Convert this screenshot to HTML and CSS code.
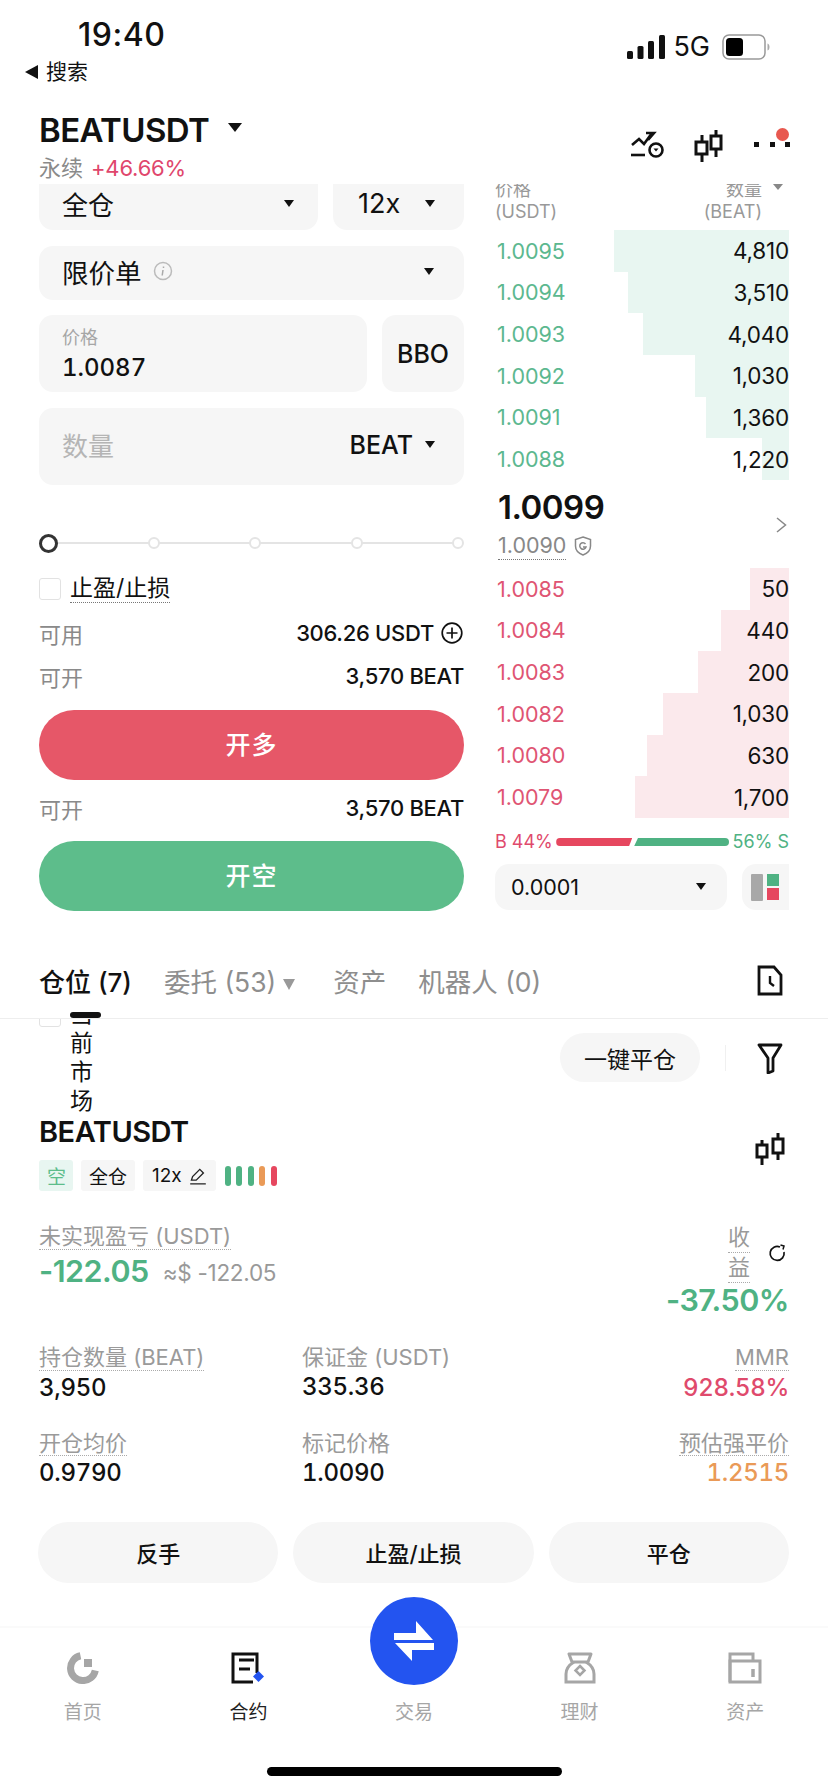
FILE: index.html
```html
<!DOCTYPE html>
<html lang="zh-CN">
<head>
<meta charset="utf-8">
<title>BEATUSDT</title>
<link rel="stylesheet" href="styles.css">
</head>
<body>
<div class="app">
  <div class="status">
    <div class="status-left">
      <div class="time">19:40</div>
      <div class="back"><span class="back-tri"></span>搜索</div>
    </div>
    <div class="status-right">
      <svg class="signal" width="38" height="24" viewBox="0 0 38 24"><rect x="0" y="16" width="6" height="8" rx="1.5"/><rect x="10.500" y="11" width="6" height="13" rx="1.500"/><rect x="21" y="6" width="6" height="18" rx="1.500"/><rect x="32" y="0" width="6" height="24" rx="1.500"/></svg>
      <span class="net">5G</span>
      <svg class="battery" width="48" height="26" viewBox="0 0 48 26"><rect x="1" y="1" width="42" height="24" rx="6" fill="#fff" stroke="#999" stroke-width="1.500"/><rect x="4" y="4" width="17" height="18" rx="3.500" fill="#000"/><path d="M45.500 9.500c1.500.5 2 2 2 3.500s-.5 3-2 3.500z" fill="#aaa"/></svg>
    </div>
  </div>

  <header class="hdr">
    <div>
      <div class="title-line"><span class="title">BEATUSDT</span><span class="tri tri-lg"></span></div>
      <div class="subline"><span class="muted">永续</span><span class="change">+46.66%</span></div>
    </div>
    <div class="hdr-icons">
      <svg width="34" height="28" viewBox="0 0 34 28" fill="none" stroke="#111" stroke-width="2.600"><path d="M2 15l7-6 5 5 8-11"/><path d="M16 3h8v0l-6 7" /><path d="M1 25h14"/><circle cx="26" cy="20" r="6.500"/><path d="M23.500 18.500h5l-2.500 3z" fill="#111" stroke="none"/></svg>
      <svg width="30" height="32" viewBox="0 0 30 32" fill="none" stroke="#111" stroke-width="3"><path d="M8 5v7M8 24v8M22 0v6M22 19v8"/><rect x="2" y="12" width="11" height="12"/><rect x="17" y="6" width="10" height="13"/></svg>
      <div class="more"><i></i><i></i><i></i><b></b></div>
    </div>
  </header>

  <section class="trade">
    <div class="form">
      <div class="row">
        <div class="field sel cut grow"><span>全仓</span><span class="tri"></span></div>
        <div class="field sel cut lev"><span>12x</span><span class="tri"></span></div>
      </div>
      <div class="field sel type"><span class="type-l">限价单<svg width="20" height="20" viewBox="0 0 20 20" fill="none"><circle cx="10" cy="10" r="8.500" stroke="#bbb" stroke-width="1.500"/><path d="M10.500 5.500v1.500M10 9l-.8 5.500" stroke="#aaa" stroke-width="1.500"/></svg></span><span class="tri"></span></div>
      <div class="row price-row">
        <div class="field price grow"><span class="price-l">价格</span><span class="price-v">1.0087</span></div>
        <div class="field bbo">BBO</div>
      </div>
      <div class="field sel qty"><span class="qty-l">数量</span><span class="qty-r">BEAT<span class="tri"></span></span></div>
      <div class="slider"><span class="dot first"></span><span class="dot"></span><span class="dot"></span><span class="dot"></span><span class="dot"></span></div>
      <div class="check"><span class="box"></span><span class="dotted">止盈/止损</span></div>
      <div class="kv kv-a"><span class="muted">可用</span><span class="kv-v">306.26 USDT<svg width="22" height="22" viewBox="0 0 22 22" fill="none" stroke="#111" stroke-width="1.700"><circle cx="11" cy="11" r="9.800"/><path d="M11 5.500v11M5.500 11h11"/></svg></span></div>
      <div class="kv kv-b"><span class="muted">可开</span><span class="kv-v">3,570 BEAT</span></div>
      <div class="cta buy">开多</div>
      <div class="kv kv-c"><span class="muted">可开</span><span class="kv-v">3,570 BEAT</span></div>
      <div class="cta sell">开空</div>
    </div>

    <div class="book">
      <div class="book-head">
        <div>价格<br>(USDT)</div>
        <div class="book-head-r">数量<span class="tri tri-gray"></span><br><span class="beat-u">(BEAT)</span></div>
      </div>
      <div class="rows asks">
        <div class="ob"><i style="width:175px"></i><span class="p">1.0095</span><span class="q">4,810</span></div>
        <div class="ob"><i style="width:161px"></i><span class="p">1.0094</span><span class="q">3,510</span></div>
        <div class="ob"><i style="width:146px"></i><span class="p">1.0093</span><span class="q">4,040</span></div>
        <div class="ob"><i style="width:94px"></i><span class="p">1.0092</span><span class="q">1,030</span></div>
        <div class="ob"><i style="width:83px"></i><span class="p">1.0091</span><span class="q">1,360</span></div>
        <div class="ob"><i style="width:27px"></i><span class="p">1.0088</span><span class="q">1,220</span></div>
      </div>
      <div class="mid">
        <div>
          <div class="last">1.0099</div>
          <div class="mark"><span class="dotted">1.0090</span><svg width="18" height="20" viewBox="0 0 18 20" fill="none" stroke="#888" stroke-width="1.500"><path d="M9 1l7.500 2.500V10c0 4-3.500 7.500-7.500 9-4-1.500-7.500-5-7.500-9V3.500z"/><path d="M11.500 8a3.200 3.200 0 1 0 .5 3H9"/></svg></div>
        </div>
        <svg class="chev" width="11" height="16" viewBox="0 0 11 16" fill="none" stroke="#888" stroke-width="1.500"><path d="M1 1l8.500 7L1 15"/></svg>
      </div>
      <div class="rows bids">
        <div class="ob"><i style="width:39px"></i><span class="p">1.0085</span><span class="q">50</span></div>
        <div class="ob"><i style="width:68px"></i><span class="p">1.0084</span><span class="q">440</span></div>
        <div class="ob"><i style="width:91px"></i><span class="p">1.0083</span><span class="q">200</span></div>
        <div class="ob"><i style="width:126px"></i><span class="p">1.0082</span><span class="q">1,030</span></div>
        <div class="ob"><i style="width:142px"></i><span class="p">1.0080</span><span class="q">630</span></div>
        <div class="ob"><i style="width:154px"></i><span class="p">1.0079</span><span class="q">1,700</span></div>
      </div>
      <div class="ratio">
        <span class="r">B 44%</span>
        <span class="ratio-bars"><span class="rb"></span><span class="gb"></span></span>
        <span class="g">56% S</span>
      </div>
      <div class="book-foot">
        <div class="field step"><span>0.0001</span><span class="tri"></span></div>
        <div class="field layout"><span class="l-gray"></span><span class="l-col"><span class="l-green"></span><span class="l-red"></span></span></div>
      </div>
    </div>
  </section>

  <nav class="tabs">
    <span class="tab on">仓位 (7)</span>
    <span class="tab drop">委托 (53)<span class="tri tri-tab"></span></span>
    <span class="tab">资产</span>
    <span class="tab">机器人 (0)</span>
    <svg class="tab-ic" width="26" height="31" viewBox="0 0 26 31" fill="none" stroke="#111" stroke-width="2.800"><path d="M2 2h15l7 8v19H2z"/><path d="M13 11v7l4 3" stroke-width="2.400"/></svg>
    <span class="ind"></span>
  </nav>

  <section class="pos">
    <div class="filter">
      <span class="box box-f"></span>
      <span class="vert">当前市场</span>
      <span class="pill">一键平仓</span>
      <span class="sep"></span>
      <svg width="26" height="31" viewBox="0 0 26 31" fill="none" stroke="#111" stroke-width="2.800"><path d="M2 2h22l-8 13v13l-5 2V15z" stroke-linejoin="round"/></svg>
    </div>
    <div class="pos-head">
      <div>
        <div class="pos-title">BEATUSDT</div>
        <div class="tags">
          <span class="tag short">空</span>
          <span class="tag">全仓</span>
          <span class="tag tag-lev">12x<svg width="18" height="18" viewBox="0 0 15 15" fill="none" stroke="#222" stroke-width="1.100"><path d="M2 11l1-3 6-6 3 3-6 6zM1 14h13"/></svg></span>
          <span class="bars"><i class="bg"></i><i class="bg"></i><i class="bg"></i><i class="bo"></i><i class="br"></i></span>
        </div>
      </div>
      <svg class="pos-ic" width="30" height="32" viewBox="0 0 30 32" fill="none" stroke="#111" stroke-width="3"><path d="M7 7v5M7 24v8M23 0v6M23 20v7"/><rect x="2" y="12" width="10" height="12"/><rect x="18" y="6" width="10" height="14"/></svg>
    </div>
    <div class="pnl">
      <div>
        <div class="lb"><span class="dotted-l">未实现盈亏 (USDT)</span></div>
        <div class="pnl-v"><span class="big g">-122.05</span><span class="approx">≈$ -122.05</span></div>
      </div>
      <div class="pnl-r">
        <div class="pnl-rt"><div class="vert2"><span>收</span><span>益</span></div><svg width="18" height="18" viewBox="0 0 18 18" fill="none" stroke="#111" stroke-width="1.700"><path d="M12 3a7 7 0 1 0 4 5"/><path d="M12.500 1l3.500 1-1 3.500" stroke-width="1.500"/></svg></div>
        <div class="big g">-37.50%</div>
      </div>
    </div>
    <div class="stats">
      <div><div class="lb"><span class="dotted-l">持仓数量 (BEAT)</span></div><div class="v">3,950</div></div>
      <div><div class="lb"><span>保证金 (USDT)</span></div><div class="v">335.36</div></div>
      <div class="rt"><div class="lb"><span class="dotted-l">MMR</span></div><div class="v r">928.58%</div></div>
      <div><div class="lb"><span class="dotted-l">开仓均价</span></div><div class="v">0.9790</div></div>
      <div><div class="lb"><span>标记价格</span></div><div class="v">1.0090</div></div>
      <div class="rt"><div class="lb"><span class="dotted-l">预估强平价</span></div><div class="v o">1.2515</div></div>
    </div>
    <div class="acts"><span>反手</span><span>止盈/止损</span><span>平仓</span></div>
  </section>

  <footer class="nav">
    <div class="nav-items">
      <div class="ni">
        <svg width="32" height="32" viewBox="0 0 32 32" fill="none"><path d="M13.500 3.800A12.500 12.500 0 1 0 28.300 18.500" stroke="#a6a6a6" stroke-width="7"/><rect x="17" y="7" width="8" height="8" fill="#a6a6a6"/></svg>
        <span>首页</span>
      </div>
      <div class="ni on">
        <svg width="34" height="32" viewBox="0 0 34 32" fill="none"><path d="M26 21V2H2v28h20" stroke="#111" stroke-width="3"/><path d="M8 8h15M8 17h11" stroke="#111" stroke-width="3"/><path d="M27.500 19l5.500 5.500-5.500 5.500-5.500-5.500z" fill="#2354f0"/></svg>
        <span>合约</span>
      </div>
      <div class="ni"><span class="ni-space"></span><span>交易</span></div>
      <div class="ni">
        <svg width="32" height="32" viewBox="0 0 32 32" fill="none" stroke="#a6a6a6" stroke-width="3"><path d="M5 2h22l-3 8H8z" stroke-linejoin="round"/><path d="M10 10C5 13 2 17 2 22v8h28v-8c0-5-3-9-8-12"/><path d="M16 14l4.500 4.500-4.500 4.500-4.500-4.500z" stroke-width="2.500"/></svg>
        <span>理财</span>
      </div>
      <div class="ni">
        <svg width="34" height="32" viewBox="0 0 34 32" fill="none" stroke="#a6a6a6" stroke-width="3"><path d="M2 30V2h23v7"/><path d="M2 9h30v21H2z"/><path d="M25 17v8" stroke-width="3.500"/></svg>
        <span>资产</span>
      </div>
    </div>
    <div class="fab"><svg width="44" height="44" viewBox="0 0 44 44" fill="#fff"><path d="M24 2l17 19H2v-7h22zM20 42L3 24h39v7H20z"/></svg></div>
    <div class="home"></div>
  </footer>
</div>
</body>
</html>
```
FILE: styles.css
```css
* { box-sizing: border-box; }
html, body { margin: 0; padding: 0; background: #fff; }
body { font-family: Inter, "Noto Sans CJK SC", sans-serif; color: #111; }
.app { width: 828px; height: 1792px; overflow: hidden; display: flex; flex-direction: column; background: #fff; }

.status { height: 96px; flex: none; display: flex; justify-content: space-between; padding: 17px 58px 0 25px; }
.time { margin-left: 53px; font-size: 32px; line-height: 36px; font-weight: 500; letter-spacing: .5px; }
.back { display: flex; align-items: center; gap: 8px; margin-top: 7px; font-size: 21px; line-height: 24px; }
.back-tri { width: 0; height: 0; border-style: solid; border-width: 7px 13px 7px 0; border-color: transparent #111 transparent transparent; }
.status-right { display: flex; align-items: center; gap: 8px; height: 26px; margin-top: 17px; }
.signal { fill: #111; }
.net { font-size: 27px; line-height: 26px; font-weight: 400; margin-right: 4px; }

.tri { display: inline-block; width: 0; height: 0; border-style: solid; border-width: 7px 5px 0; border-color: #111 transparent transparent; }
.tri-lg { border-width: 9px 7px 0; margin-left: 19px; position: relative; top: -3px; }
.tri-gray { border-width: 6px 5px 0; border-color: #888 transparent transparent; margin-left: 11px; position: relative; top: -6px; }
.tri-tab { border-width: 11px 6px 0; border-color: #999 transparent transparent; margin-left: 7px; position: relative; top: -2px; }

.hdr { height: 88px; flex: none; display: flex; justify-content: space-between; padding: 16px 38px 0 39px; }
.title-line { display: flex; align-items: center; height: 36px; }
.title { font-size: 33px; font-weight: 600; letter-spacing: -.6px; }
.subline { display: flex; gap: 8px; align-items: center; font-size: 22px; line-height: 28px; margin-top: 6px; }
.muted { color: #8a8a8a; }
.change { color: #e0466c; letter-spacing: -.2px; }
.hdr-icons { display: flex; align-items: flex-start; gap: 30px; margin-top: 18px; }
.more { width: 36px; height: 30px; display: flex; justify-content: space-between; align-items: flex-start; padding-top: 12px; position: relative; }
.more i { width: 5px; height: 5px; background: #111; }
.more b { position: absolute; right: 1px; top: -2px; width: 13px; height: 13px; background: #e8584f; border-radius: 50%; }

.trade { flex: none; height: 746px; display: flex; gap: 31px; padding: 0 39px; }
.form { width: 425px; flex: none; display: flex; flex-direction: column; }
.field { background: #f6f6f6; border-radius: 14px; }
.row { display: flex; gap: 15px; }
.grow { flex: 1; }
.sel { display: flex; align-items: center; justify-content: space-between; font-size: 26px; }
.cut { height: 46px; border-radius: 0 0 14px 14px; padding: 0 24px 8px 23px; }
.lev { width: 131px; padding: 0 29px 8px 25px; font-size: 27px; }
.type { height: 54px; margin-top: 16px; padding: 0 30px 4px 23px; font-size: 26.500px; }
.type-l { display: flex; align-items: center; gap: 11px; }
.price-row { margin-top: 15px; }
.price { height: 77px; padding: 10px 24px 0 23px; display: flex; flex-direction: column; }
.price-l { font-size: 18px; line-height: 26px; color: #a6a6a6; }
.price-v { font-size: 24px; line-height: 30px; font-weight: 500; margin-top: 2px; font-variant-numeric: tabular-nums; }
.bbo { width: 82px; display: flex; align-items: center; justify-content: center; font-size: 25px; font-weight: 500; }
.qty { height: 77px; margin-top: 16px; padding: 0 29px 4px 23px; }
.qty-l { color: #b5b5b5; }
.qty-r { display: flex; align-items: center; gap: 12px; font-size: 25px; font-weight: 500; }
.slider { margin-top: 49px; height: 18px; display: flex; justify-content: space-between; align-items: center; position: relative; }
.slider::before { content: ""; position: absolute; left: 4px; right: 4px; top: 8px; height: 2px; background: #e4e4e4; }
.dot { width: 12px; height: 12px; border-radius: 50%; background: #fff; border: 2px solid #e4e4e4; position: relative; }
.dot.first { width: 19px; height: 19px; border: 3px solid #333; }
.check { display: flex; align-items: center; gap: 9px; margin-top: 25px; height: 24px; font-size: 23px; }
.box { width: 22px; height: 22px; border: 1.500px solid #e2e2e2; border-radius: 3px; flex: none; }
.dotted { border-bottom: 1px dotted #777; line-height: 27px; }
.dotted-l { border-bottom: 1.500px dotted #aaa; display: inline-block; line-height: 24.500px; }
.kv { display: flex; justify-content: space-between; align-items: center; height: 30px; font-size: 22px; }
.kv-a { margin-top: 17px; }
.kv-b { margin-top: 13px; }
.kv-c { margin-top: 13px; }
.kv-v { display: flex; align-items: center; gap: 7px; font-weight: 500; letter-spacing: -.3px; }
.kv-v svg { margin-right: 1px; }
.cta { height: 70px; border-radius: 35px; color: #fff; display: flex; align-items: center; justify-content: center; padding-bottom: 4px; font-size: 25px; font-weight: 500; letter-spacing: 1px; margin-top: 18px; }
.buy { background: #e65768; margin-top: 19px; }
.sell { background: #5dbd8b; }

.book { width: 294px; flex: none; display: flex; flex-direction: column; }
.book-head { height: 46px; overflow: hidden; display: flex; justify-content: space-between; font-size: 18px; line-height: 22px; color: #999; }
.book-head > div { margin-top: -5px; }
.book-head-r { text-align: right; padding-right: 6px; }
.beat-u { margin-right: 21px; }
.ob { height: 41.670px; position: relative; display: flex; justify-content: space-between; align-items: center; font-size: 21.500px; padding: 0 0 0 2px; }
.ob i { position: absolute; right: 0; top: 0; bottom: 0; }
.ob span { position: relative; }
.ob .q { font-size: 22.500px; letter-spacing: -.2px; }
.asks .ob i { background: #e8f6f1; }
.asks .p { color: #5cb88f; }
.bids .ob i { background: #fbe9ec; }
.bids .p { color: #df5573; }
.mid { height: 88px; display: flex; justify-content: space-between; align-items: flex-start; padding: 11px 2px 0 3px; }
.last { font-size: 33px; line-height: 32px; font-weight: 600; letter-spacing: -.5px; }
.mark { display: flex; align-items: center; gap: 8px; font-size: 21.500px; color: #888; margin-top: 9px; }
.chev { margin-top: 26px; }
.ratio { display: flex; justify-content: space-between; align-items: center; height: 24px; margin-top: 12px; font-size: 18px; }
.r { color: #df4a6c; }
.g { color: #4fb283; }
.o { color: #ea9a57; }
.ratio-bars { display: flex; gap: 2px; }
.rb, .gb { height: 8px; display: block; }
.rb { width: 76px; background: #e6475f; border-radius: 4px 0 0 4px; clip-path: polygon(0 0, 100% 0, 96% 100%, 0 100%); }
.gb { width: 95px; background: #4fb283; border-radius: 0 4px 4px 0; clip-path: polygon(4% 0, 100% 0, 100% 100%, 0 100%); }
.book-foot { display: flex; gap: 15px; margin-top: 10px; }
.step { width: 232px; height: 46px; display: flex; align-items: center; justify-content: space-between; padding: 0 21px 0 16px; font-size: 21.500px; }
.layout { width: 47px; height: 46px; padding: 10px 9px; display: flex; gap: 4px; border-radius: 14px 0 0 14px; }
.l-gray { width: 12px; height: 27px; background: #a8a8a8; border-radius: 1px; }
.l-col { display: flex; flex-direction: column; gap: 2px; }
.l-green { width: 12px; height: 13px; background: #4fb283; }
.l-red { width: 12px; height: 12px; background: #e6475f; }

.tabs { height: 89px; flex: none; display: flex; align-items: center; gap: 32px; padding: 12px 45px 0 39px; border-bottom: 1px solid #eee; position: relative; background: #fff; z-index: 2; font-size: 26.500px; color: #8e8e8e; }
.tab.on { color: #111; font-weight: 500; font-size: 26px; }
.drop { margin-right: 6px; }
.tab-ic { margin-left: auto; }
.ind { position: absolute; left: 70px; bottom: 0; width: 31px; height: 6px; background: #111; border-radius: 3px; }

.pos { flex: 1; min-height: 0; overflow: hidden; position: relative; }
.filter { display: flex; align-items: flex-start; margin-top: -19px; padding: 0 45px 0 39px; }
.box-f { margin-top: 5px; }
.vert { width: 23px; margin-left: 9px; font-size: 23px; line-height: 29px; }
.pill { margin: 33px 0 0 auto; height: 49px; width: 140px; border-radius: 25px; background: #f6f6f6; display: flex; align-items: center; justify-content: center; font-size: 23px; }
.sep { width: 1px; height: 26px; background: #f0f0f0; margin: 45px 31px 0 25px; }
.filter svg { margin-top: 43px; }
.pos-head { display: flex; justify-content: space-between; padding: 0 43px 0 39px; }
.pos-title { font-size: 29px; line-height: 32px; font-weight: 600; letter-spacing: -.5px; }
.pos-ic { margin-top: 17px; }
.tags { display: flex; gap: 8px; margin-top: 12px; align-items: center; }
.tag { height: 31px; background: #f6f6f6; border-radius: 3px; padding: 0 8px; display: flex; align-items: center; gap: 7px; font-size: 19px; }
.short { background: #e8f6f1; color: #5dbd8b; width: 34px; }
.tag-lev { padding: 0 9px; }
.bars { display: flex; gap: 5.500px; margin-left: 1px; }
.bars i { width: 6px; height: 20px; border-radius: 3px; }
.bg { background: #4fb283; }
.bo { background: #ea9a57; }
.br { background: #e6475f; }
.pnl { display: flex; justify-content: space-between; padding: 0 39px 0 39px; margin-top: 32px; }
.lb { font-size: 22px; line-height: 26px; color: #9a9a9a; }
.pnl-v { display: flex; align-items: center; gap: 14px; margin-top: 3px; height: 36px; }
.big { font-size: 30.500px; line-height: 36px; font-weight: 600; letter-spacing: -.5px; }
.approx { font-size: 22.500px; color: #999; margin-top: 4px; letter-spacing: -.3px; }
.pnl-r { display: flex; flex-direction: column; align-items: flex-end; }
.pnl-rt { display: flex; align-items: flex-start; gap: 18px; height: 59px; margin-right: 3px; }
.pnl-rt svg { margin-top: 21px; }
.vert2 { width: 22px; font-size: 22px; color: #9a9a9a; display: flex; flex-direction: column; }
.vert2 span { line-height: 28px; height: 30px; border-bottom: 1.500px dotted #aaa; }
.stats { display: grid; grid-template-columns: 263px 1fr auto; row-gap: 26px; padding: 0 39px; margin-top: 26px; }
.v { font-size: 24px; line-height: 32px; font-weight: 500; margin-top: 1px; letter-spacing: -.3px; font-variant-numeric: tabular-nums; }
.rt { text-align: right; }
.acts { display: grid; grid-template-columns: repeat(3, 1fr); gap: 15px; padding: 0 39px 0 38px; margin-top: 33px; }
.acts span { height: 61px; border-radius: 31px; background: #f6f6f6; display: flex; align-items: center; justify-content: center; padding-bottom: 2px; font-size: 22px; font-weight: 500; }

.nav { height: 166px; flex: none; border-top: 2px solid #fafafa; position: relative; display: flex; flex-direction: column; align-items: center; background: #fff; }
.nav-items { width: 100%; display: grid; grid-template-columns: repeat(5, 1fr); padding-top: 24px; }
.ni { display: flex; flex-direction: column; align-items: center; font-size: 19px; color: #a6a6a6; }
.ni svg, .ni-space { height: 32px; }
.ni span:last-child { line-height: 26px; margin-top: 16px; }
.ni.on { color: #222; }
.fab { position: absolute; left: 370px; top: -31px; width: 88px; height: 88px; border-radius: 50%; background: #2354f0; display: flex; align-items: center; justify-content: center; }
.home { width: 295px; height: 9px; border-radius: 5px; background: #000; margin-top: 41px; }
```
